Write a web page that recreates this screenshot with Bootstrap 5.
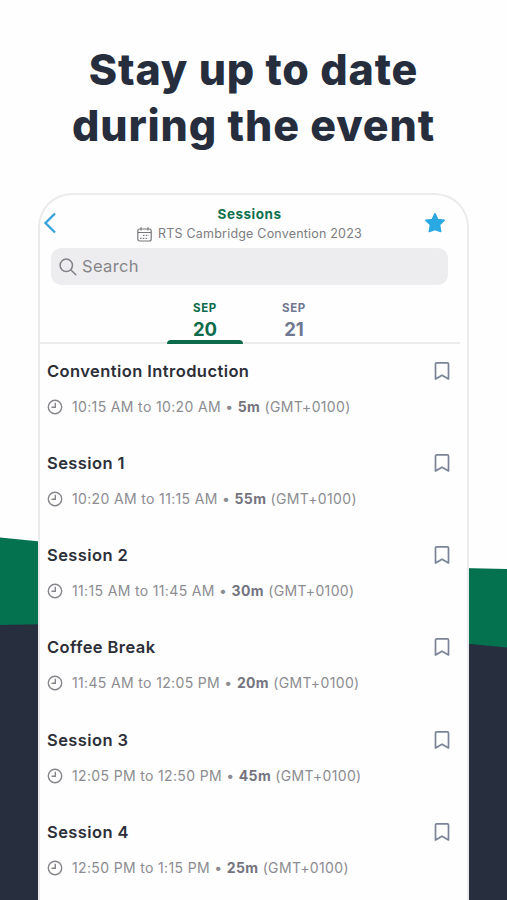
<!DOCTYPE html>
<html lang="en">
<head>
<meta charset="utf-8">
<meta name="viewport" content="width=device-width, initial-scale=1">
<title>Sessions</title>
<link href="https://cdn.jsdelivr.net/npm/bootstrap@5.3.0/dist/css/bootstrap.min.css" rel="stylesheet">
<style>
body{font-family:Inter,"Work Sans",sans-serif;background:#fefefe;width:507px;height:900px}
.backdrop{position:absolute;inset:0;z-index:-1}
.headline{font-size:43px;line-height:56px;font-weight:800;color:#262e3e;padding-top:41px;height:193px;letter-spacing:.9px}
.headline span{display:block;white-space:nowrap}
.phone{width:431px;margin-left:38px;border:2px solid #ebebed;border-bottom:0;border-radius:34px 34px 0 0;background:#fefefe}
.topbar{height:53px;padding:0 21px 0 3px}
.edge-icon{margin-top:17px}
.heading-block{margin-left:18px}
.title{font-size:13.5px;line-height:18px;font-weight:700;color:#10704f;letter-spacing:.5px;padding-top:10px}
.subtitle{font-size:12.5px;line-height:22px;color:#7c7c80;letter-spacing:.2px;gap:6px}
.search{height:37px;margin:0 19px 0 11px;border-radius:10px;background:#ededef;color:#858589;font-size:16.5px;letter-spacing:.35px;padding-left:8px;gap:5px}
.days{height:59px;margin-right:7px;border-bottom:2px solid #ececee;padding-left:127px;gap:13px}
.day{width:76px;height:59px;padding-top:14px;color:#6e7890;font-weight:700;white-space:nowrap}
.day.on{color:#0d6b4b}
.day.on::after{content:"";display:block;height:4px;margin-top:-1px;background:#0d6b4b;border-radius:4px 4px 0 0}
.mon{font-size:11.5px;line-height:18px;letter-spacing:.6px}
.num{font-size:18.5px;line-height:24px}
.session{height:92.25px;padding:16.6px 17.5px 0 7px;white-space:nowrap}
.name{font-size:16.5px;line-height:20px;font-weight:600;color:#2c2f38;letter-spacing:.42px}
.when{font-size:14px;line-height:20px;color:#8c8c91;margin-top:16px;letter-spacing:.35px;gap:9px}
.when b{color:#74747f;font-weight:700}
</style>
<script src="https://cdn.jsdelivr.net/npm/bootstrap@5.3.0/dist/js/bootstrap.bundle.min.js"></script>
</head>
<body class="d-flex flex-column overflow-hidden position-relative">
<svg class="backdrop" width="507" height="900" viewBox="0 0 507 900"><path fill="#04724f" d="M0 537.500L45 542 462 568 507 569V660H0Z"/><path fill="#272f3f" d="M0 625L50 624 460 643 507 647.500V900H0Z"/></svg>
<svg width="0" height="0" class="position-absolute">
<symbol id="clock" viewBox="0 0 16 16"><g fill="none" stroke="#85858b" stroke-width="1.400"><circle cx="8" cy="8" r="6.700"/><path d="M8.300 3.800V8.300H4.500"/></g></symbol>
<symbol id="bookmark" viewBox="0 0 16 20"><path d="M1.500 3Q1.500 1.800 2.700 1.800H13.300Q14.500 1.800 14.500 3V18L8 14.200 1.500 18Z" fill="none" stroke="#7a8496" stroke-width="1.700" stroke-linejoin="round"/></symbol>
</svg>
<h1 class="headline text-center mb-0 flex-shrink-0"><span>Stay up to date</span><span>during the event</span></h1>
<main class="phone flex-grow-1 overflow-hidden">
<header class="topbar d-flex justify-content-between">
<svg class="edge-icon" width="14" height="22" viewBox="0 0 14 22"><path d="M12 1.500L2.500 11 12 20.500" fill="none" stroke="#39a3dc" stroke-width="2.400"/></svg>
<div class="heading-block text-center"><div class="title">Sessions</div>
<div class="subtitle d-flex align-items-center"><svg width="15" height="15" viewBox="0 0 15 15"><g fill="none" stroke="#77777b" stroke-width="1.200"><rect x=".8" y="2" width="13.400" height="12" rx="2"/><path d="M.8 5.500H14.200M4 .3V3.500M11 .3V3.500"/><path d="M6 8.300H12M3 11.300H10" stroke-dasharray="1.500 1.300"/></g></svg><span>RTS Cambridge Convention 2023</span></div></div>
<svg class="edge-icon" width="22" height="22" viewBox="0 0 22 22"><path d="M11 1.700L13.800 7.500 20.200 8.300 15.600 12.800 16.700 19.600 11 17.600 5.300 19.600 6.400 12.800 1.800 8.300 8.200 7.500Z" fill="#2aa8e2" stroke="#2aa8e2" stroke-width="1.500" stroke-linejoin="round"/></svg>
</header>
<div class="search d-flex align-items-center"><svg width="18" height="18" viewBox="0 0 18 18"><g fill="none" stroke="#818186" stroke-width="1.500" stroke-linecap="round"><circle cx="7.300" cy="7.300" r="6.200"/><path d="M12 12L16.800 16.700"/></g></svg><span>Search</span></div>
<div class="days d-flex text-center"><div class="day on"><div class="mon">SEP</div><div class="num">20</div></div><div class="day"><div class="mon">SEP</div><div class="num">21</div></div></div>
<section>
<div class="session"><div class="d-flex justify-content-between"><span class="name">Convention Introduction</span><svg width="16" height="20"><use href="#bookmark"/></svg></div><div class="when d-flex align-items-center"><svg width="16" height="16"><use href="#clock"/></svg><span>10:15 AM to 10:20 AM • <b>5m</b> (GMT+0100)</span></div></div>
<div class="session"><div class="d-flex justify-content-between"><span class="name">Session 1</span><svg width="16" height="20"><use href="#bookmark"/></svg></div><div class="when d-flex align-items-center"><svg width="16" height="16"><use href="#clock"/></svg><span>10:20 AM to 11:15 AM • <b>55m</b> (GMT+0100)</span></div></div>
<div class="session"><div class="d-flex justify-content-between"><span class="name">Session 2</span><svg width="16" height="20"><use href="#bookmark"/></svg></div><div class="when d-flex align-items-center"><svg width="16" height="16"><use href="#clock"/></svg><span>11:15 AM to 11:45 AM • <b>30m</b> (GMT+0100)</span></div></div>
<div class="session"><div class="d-flex justify-content-between"><span class="name">Coffee Break</span><svg width="16" height="20"><use href="#bookmark"/></svg></div><div class="when d-flex align-items-center"><svg width="16" height="16"><use href="#clock"/></svg><span>11:45 AM to 12:05 PM • <b>20m</b> (GMT+0100)</span></div></div>
<div class="session"><div class="d-flex justify-content-between"><span class="name">Session 3</span><svg width="16" height="20"><use href="#bookmark"/></svg></div><div class="when d-flex align-items-center"><svg width="16" height="16"><use href="#clock"/></svg><span>12:05 PM to 12:50 PM • <b>45m</b> (GMT+0100)</span></div></div>
<div class="session"><div class="d-flex justify-content-between"><span class="name">Session 4</span><svg width="16" height="20"><use href="#bookmark"/></svg></div><div class="when d-flex align-items-center"><svg width="16" height="16"><use href="#clock"/></svg><span>12:50 PM to 1:15 PM • <b>25m</b> (GMT+0100)</span></div></div>
</section>
</main>
</body>
</html>
